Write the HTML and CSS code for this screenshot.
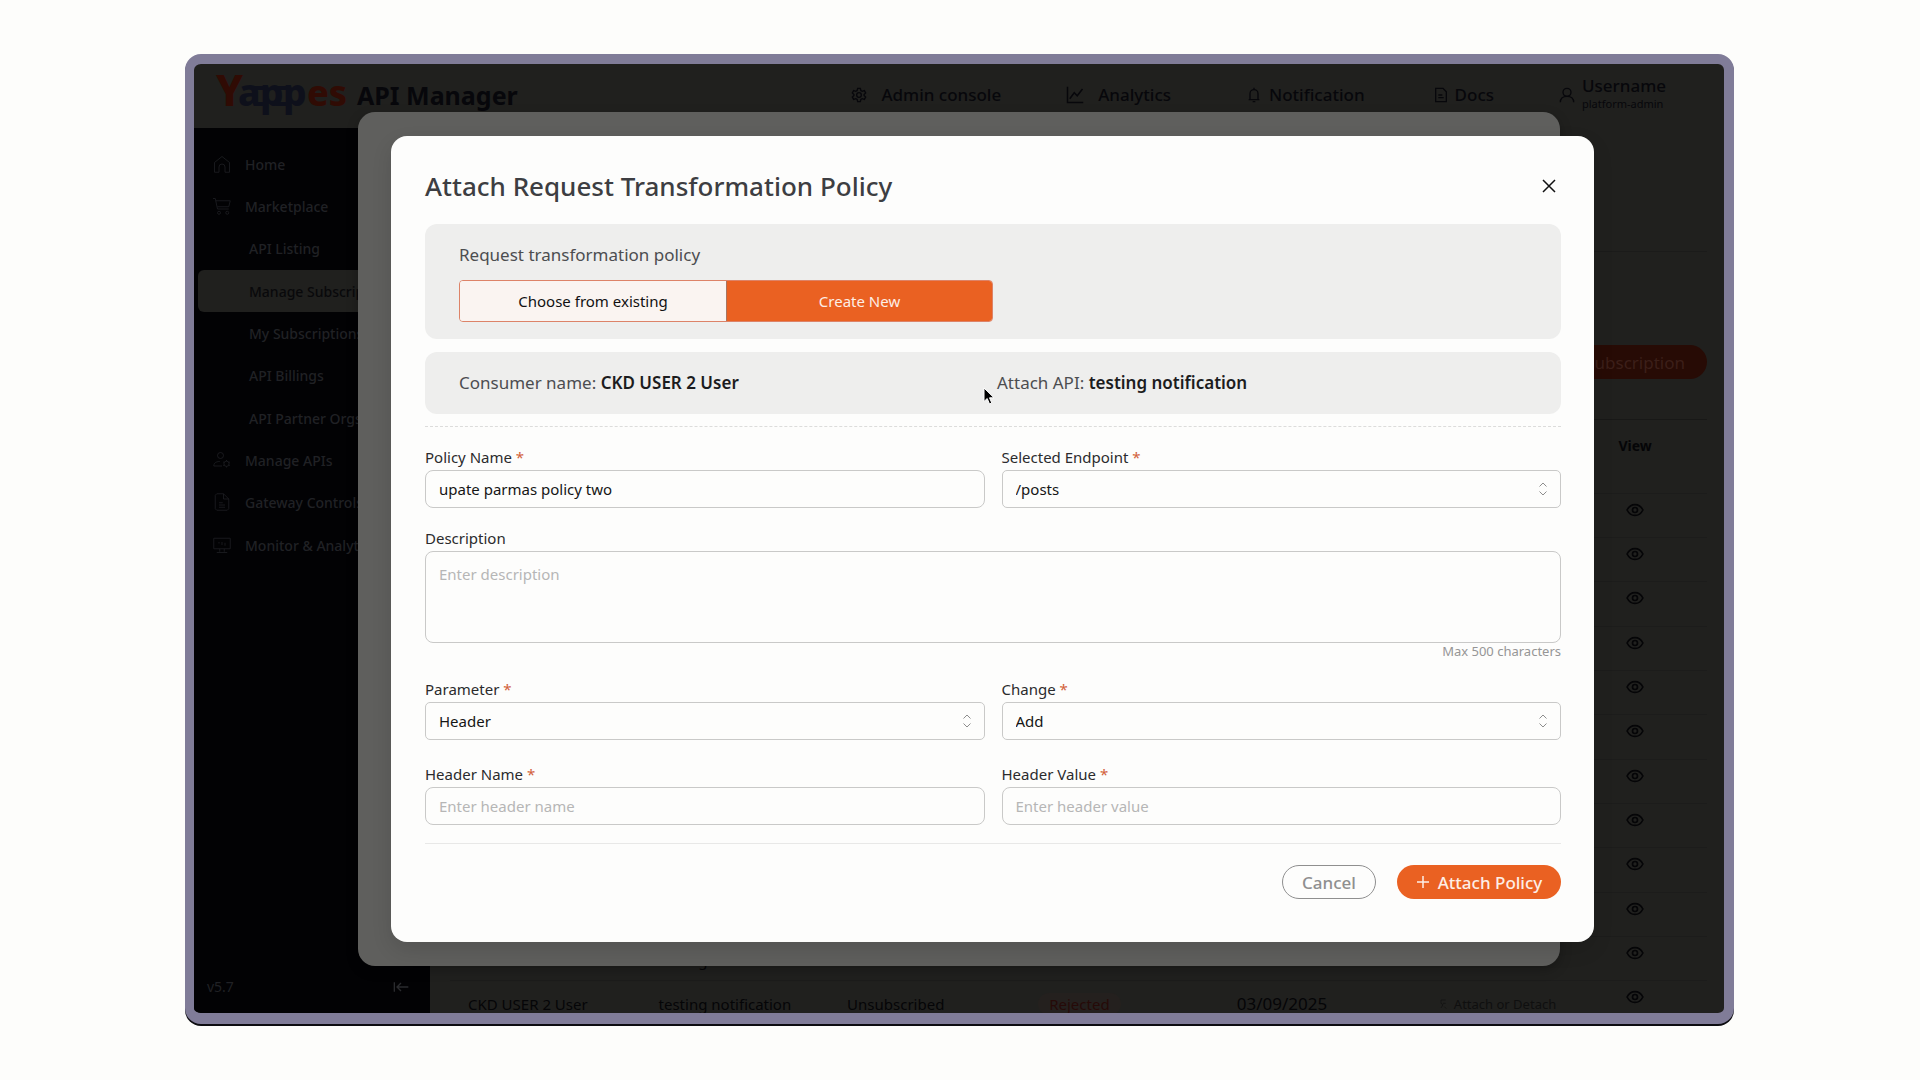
FILE: index.html
```html
<!DOCTYPE html>
<html lang="en">
<head>
<meta charset="utf-8">
<meta name="viewport" content="width=device-width, initial-scale=1">
<title>Yappes API Manager</title>
<link rel="stylesheet" href="styles.css">
</head>
<body>
<svg class="sprite" aria-hidden="true">
  <symbol id="eye" viewBox="0 0 24 24"><path d="M2.5 12C4.5 8 8 5.500 12 5.500s7.500 2.500 9.500 6.500c-2 4-5.500 6.500-9.500 6.500S4.500 16 2.500 12z"/><circle cx="12" cy="12" r="3"/></symbol>
  <symbol id="updown" viewBox="0 0 10 16"><path d="M1.500 5.500 5 2l3.500 3.500M1.500 10.500 5 14l3.500-3.500"/></symbol>
</svg>
<div class="window">
  <header class="topbar">
    <svg class="logo" viewBox="0 0 132 48" role="img" aria-label="Yappes">
      <text class="logo-y" x="0" y="35">Y</text>
      <text class="logo-app" x="22 44 67" y="35">app</text>
      <path class="logo-link" d="M36 17h14M58 17h14M38 33h10M60 33h12"/>
      <text class="logo-es" x="91" y="35">es</text>
    </svg>
    <h1 class="brand">API Manager</h1>
    <nav class="nav">
      <a class="nav-item nav-admin" href="#"><svg viewBox="0 0 24 24"><path d="M10 2h4l.8 3.200 2 1.200 3.200-1 2 3.500-2.400 2.300v1.600l2.400 2.300-2 3.500-3.200-1-2 1.200L14 22h-4l-.8-3.200-2-1.200-3.200 1-2-3.500 2.400-2.300v-1.600L2 8.900l2-3.500 3.200 1 2-1.200z"/><circle cx="12" cy="12" r="3.500"/></svg>Admin console</a>
      <a class="nav-item nav-analytics" href="#"><svg viewBox="0 0 24 24"><path d="M2 1v21h21M5 17l6-8 4 4 7-9"/></svg>Analytics</a>
      <a class="nav-item nav-notify" href="#"><svg viewBox="0 0 20 24"><path d="M2 19h16M4 19V10a6 6 0 0 1 12 0v9M10 4V1M8 22h4"/></svg>Notification</a>
      <a class="nav-item nav-docs" href="#"><svg viewBox="0 0 20 24"><path d="M2 2h11l5 5v15H2zM6 12h6M6 16h8"/></svg>Docs</a>
      <a class="user" href="#"><svg viewBox="0 0 24 24"><circle cx="12" cy="8" r="6"/><path d="M2 23c0-6 4-9 10-9s10 3 10 9"/></svg><span class="user-text"><span class="user-name">Username</span><span class="user-role">platform-admin</span></span></a>
    </nav>
  </header>
  <div class="body">
    <aside class="sidebar">
      <ul class="menu">
        <li><a href="#"><svg viewBox="0 0 24 24"><path d="M2 10 12 2l10 8v13h-6v-7a4 4 0 0 0-8 0v7H2z"/></svg>Home</a></li>
        <li><a href="#"><svg viewBox="0 0 24 24"><path d="M0 2h3l3 14h15M4 5h19l-2 8H6"/><circle cx="8" cy="21" r="2"/><circle cx="19" cy="21" r="2"/></svg>Marketplace</a></li>
        <li><a class="sub" href="#">API Listing</a></li>
        <li><a class="sub active" href="#">Manage Subscriptions</a></li>
        <li><a class="sub" href="#">My Subscriptions</a></li>
        <li><a class="sub" href="#">API Billings</a></li>
        <li><a class="sub" href="#">API Partner Orgs</a></li>
        <li><a href="#"><svg viewBox="0 0 24 24"><circle cx="10" cy="6" r="4"/><path d="M12 20H1c0-4 3-6 8-6"/><circle cx="18" cy="17" r="3.500"/><path d="M18 12v1.500M18 20.500V22M13.500 14.500l1.500 1M21 18.500l1.500 1M13.500 19.500l1.500-1M21 15.500l1.500-1"/></svg>Manage APIs</a></li>
        <li><a href="#"><svg viewBox="0 0 24 24"><path d="M5 1h9l7 7v13l-2 2H5l-2-2V3zM14 1v7h7M8 13h5M8 16h8M8 19h8"/></svg>Gateway Controls</a></li>
        <li><a href="#"><svg viewBox="0 0 24 24"><path d="M1 3h22v14H1zM9 17v4M15 17v4M5 22h14M8 8v2M12 8v4M16 9v4"/></svg>Monitor &amp; Analytics</a></li>
      </ul>
      <div class="sidebar-foot"><span>v5.7</span><button class="collapse" aria-label="Collapse menu"><svg viewBox="0 0 24 16"><path d="M2 1v14M23 8H6M12 2 6 8l6 6"/></svg></button></div>
    </aside>
    <main class="content">
      <div class="toolbar"><button class="add">Add Subscription</button></div>
      <table class="grid">
        <colgroup><col class="c-consumer"><col class="c-api"><col class="c-status"><col class="c-state"><col class="c-date"><col class="c-policy"><col class="c-view"></colgroup>
        <thead><tr><th colspan="6"></th><th class="view">View</th></tr></thead>
        <tbody>
          <tr><td colspan="6"></td><td class="view"><svg><use href="#eye"/></svg></td></tr>
          <tr><td colspan="6"></td><td class="view"><svg><use href="#eye"/></svg></td></tr>
          <tr><td colspan="6"></td><td class="view"><svg><use href="#eye"/></svg></td></tr>
          <tr><td colspan="6"></td><td class="view"><svg><use href="#eye"/></svg></td></tr>
          <tr><td colspan="6"></td><td class="view"><svg><use href="#eye"/></svg></td></tr>
          <tr><td colspan="6"></td><td class="view"><svg><use href="#eye"/></svg></td></tr>
          <tr><td colspan="6"></td><td class="view"><svg><use href="#eye"/></svg></td></tr>
          <tr><td colspan="6"></td><td class="view"><svg><use href="#eye"/></svg></td></tr>
          <tr><td colspan="6"></td><td class="view"><svg><use href="#eye"/></svg></td></tr>
          <tr><td colspan="6"></td><td class="view"><svg><use href="#eye"/></svg></td></tr>
          <tr><td></td><td>testing</td><td></td><td></td><td></td><td></td><td class="view"><svg><use href="#eye"/></svg></td></tr>
          <tr><td>CKD USER 2 User</td><td>testing notification</td><td>Unsubscribed</td><td><span class="badge">Rejected</span></td><td class="date">03/09/2025</td><td><span class="policy"><svg viewBox="0 0 14 18"><path d="M11 3H4v5l3 2-3 5M7 8h4M9 13l3 3"/></svg>Attach or Detach</span></td><td class="view"><svg><use href="#eye"/></svg></td></tr>
        </tbody>
      </table>
    </main>
  </div>

  <div class="dialog-back"></div>
  <section class="dialog" role="dialog" aria-labelledby="dialog-title">
    <div class="dialog-head">
      <h2 id="dialog-title">Attach Request Transformation Policy</h2>
      <button class="close" aria-label="Close"><svg viewBox="0 0 14 14"><path d="M1 1l12 12M13 1 1 13"/></svg></button>
    </div>
    <div class="panel mode">
      <p>Request transformation policy</p>
      <div class="segmented"><button class="segment">Choose from existing</button><button class="segment selected">Create New</button></div>
    </div>
    <div class="panel facts">
      <p>Consumer name: <strong>CKD USER 2 User</strong></p>
      <p>Attach API: <strong>testing notification</strong></p>
    </div>
    <form class="form">
      <div class="pair">
        <div class="field"><label for="policy-name">Policy Name <span class="req">*</span></label><input id="policy-name" type="text" value="upate parmas policy two"></div>
        <div class="field"><label for="endpoint">Selected Endpoint <span class="req">*</span></label><div class="select"><select id="endpoint"><option>/posts</option></select><svg><use href="#updown"/></svg></div></div>
      </div>
      <div class="field"><label for="description">Description</label><textarea id="description" placeholder="Enter description"></textarea><span class="hint">Max 500 characters</span></div>
      <div class="pair">
        <div class="field"><label for="parameter">Parameter <span class="req">*</span></label><div class="select"><select id="parameter"><option>Header</option></select><svg><use href="#updown"/></svg></div></div>
        <div class="field"><label for="change">Change <span class="req">*</span></label><div class="select"><select id="change"><option>Add</option></select><svg><use href="#updown"/></svg></div></div>
      </div>
      <div class="pair last">
        <div class="field"><label for="header-name">Header Name <span class="req">*</span></label><input id="header-name" type="text" placeholder="Enter header name"></div>
        <div class="field"><label for="header-value">Header Value <span class="req">*</span></label><input id="header-value" type="text" placeholder="Enter header value"></div>
      </div>
      <div class="actions">
        <button type="button" class="cancel">Cancel</button>
        <button type="button" class="submit"><svg viewBox="0 0 14 14"><path d="M7 1v12M1 7h12"/></svg>Attach Policy</button>
      </div>
    </form>
    <svg class="pointer" viewBox="0 0 12 19" aria-hidden="true"><path d="M1 1v13.500l3.200-3 2.300 5.500 2.300-1-2.300-5.200H11z"/></svg>
  </section>
</div>
</body>
</html>
```
FILE: styles.css
```css
* { box-sizing: border-box; }
body {
  margin: 0;
  min-height: 100vh;
  padding: 54px 186px 56px 185px;
  display: flex;
  background: #fdfdfb;
  font-family: "Noto Sans", "Open Sans", sans-serif;
  font-size: 15px;
  color: #111;
}
button, input, select, textarea { font: inherit; color: inherit; margin: 0; }
button { padding: 0; border: 0; background: none; }
a { color: inherit; text-decoration: none; }
svg { fill: none; stroke: currentColor; flex: none; display: block; }
h1, h2, p, ul { margin: 0; padding: 0; list-style: none; font-weight: 500; }
.sprite { position: absolute; width: 0; height: 0; }

.window {
  position: relative;
  flex: 1;
  min-width: 0;
  height: calc(100vh - 110px);
  display: flex;
  flex-direction: column;
  overflow: hidden;
  border: 10px solid #807c98;
  border-left-width: 9px;
  border-bottom-width: 11px;
  border-radius: 16px;
  box-shadow: 0 2px 0 #0c0c10;
  background: #20201e;
}

/* Top bar */
.topbar { flex: none; height: 64px; display: flex; align-items: center; padding: 0 47px 2px 22px; color: #07070b; }
.logo { width: 132px; height: 48px; overflow: visible; font-weight: 800; }
.logo text { stroke: none; }
.logo-y { font-size: 42px; fill: #300b04; }
.logo-app { font-size: 37px; fill: #0e101b; }
.logo-es { font-size: 36px; fill: #300b04; }
.logo-link { stroke: #0e101b; stroke-width: 4; }
.brand { margin-left: 9px; font-size: 25px; font-weight: 700; line-height: 34px; }
.nav { margin-left: auto; display: flex; align-items: center; height: 60px; font-size: 17px; font-weight: 500; line-height: 24px; }
.nav-item { display: flex; align-items: center; }
.nav svg { stroke-width: 2; width: 16px; height: 16px; }
.nav-admin { gap: 14px; margin-right: 65px; }
.nav-analytics { gap: 14px; margin-right: 75px; }
.nav .nav-analytics svg { width: 18px; height: 18px; }
.nav-notify { gap: 7px; margin-right: 68px; }
.nav-docs { gap: 6px; margin-right: 65px; }
.user { display: flex; align-items: center; gap: 7px; width: 118px; }
.user-text { display: flex; flex-direction: column; margin-top: -4px; }
.user-name { line-height: 22px; }
.user-role { font-size: 11px; font-weight: 400; line-height: 14px; }

/* Sidebar */
.body { flex: 1; min-height: 0; display: flex; }
.sidebar { flex: none; width: 236px; padding: 15px 0 11px; display: flex; flex-direction: column; justify-content: space-between; background: #020204; color: #202125; font-size: 14px; }
.menu a { display: flex; align-items: center; gap: 14px; height: 42px; padding-left: 19px; white-space: nowrap; }
.menu li:nth-child(3n) { padding-bottom: 1px; }
.menu svg { width: 18px; height: 18px; stroke-width: 1; }
.menu .sub { margin-left: 4px; padding-left: 51px; }
.menu .active { background: #20201e; color: #09090b; border-radius: 6px 0 0 6px; }
.sidebar-foot { display: flex; align-items: center; justify-content: space-between; padding: 0 21px 0 13px; line-height: 30px; }
.collapse svg { width: 16px; height: 12px; stroke-width: 2; }
.collapse { color: #2a2b2e; }

/* Subscription list */
.content { flex: 1; min-width: 0; padding: 0 17px 0 20px; color: #050507; }
.toolbar { display: flex; justify-content: flex-end; align-items: flex-end; height: 251px; background: linear-gradient(#1b1b1a, #1b1b1a) 0 123px / 100% 1px no-repeat; }
.add { width: 180px; height: 34px; border-radius: 17px; background: #270b05; color: #3c1f19; font-size: 17px; white-space: nowrap; }
.grid { width: 100%; margin-top: 40px; border-collapse: collapse; table-layout: fixed; border-top: 1px solid #181817; }
.c-consumer { width: 15%; }
.c-api { width: 15%; }
.c-status { width: 16%; }
.c-state { width: 15%; }
.c-date { width: 16%; }
.c-policy { width: 13%; }
.c-view { width: 10%; }
.grid th { height: 74px; padding: 16px 0 0; vertical-align: top; font-size: 14px; font-weight: 700; line-height: 20px; }
.grid td { height: 44px; padding: 2px 0 0 20px; text-align: left; border-top: 1px solid #1c1c1b; line-height: 20px; white-space: nowrap; }
.grid td:first-child { padding-left: 18px; }
.grid tr:nth-child(3n) td { height: 45px; }
.grid .view { padding-left: 0; padding-right: 18px; text-align: center; }
.grid td.view { padding-top: 6px; vertical-align: top; }
.view svg { width: 20px; height: 20px; margin: 0 auto; stroke-width: 2; }
.badge { display: inline-block; margin-left: -10px; padding: 0 11px; border-radius: 11px; line-height: 22px; background: #24201e; color: #260a08; }
.grid .date { font-size: 17px; }
.policy { display: flex; align-items: center; gap: 6px; font-size: 13px; color: #0f0f0f; }
.policy svg { width: 10px; height: 12px; }

/* Dialogs lie over the page, one on top of the other */
.dialog-back { position: absolute; top: 48px; right: 164px; bottom: 47px; left: 164px; border-radius: 17px; background: #5f5f5d; box-shadow: 0 4px 12px rgba(0, 0, 0, .25); }
.dialog { position: absolute; top: 72px; right: 130px; left: 197px; padding: 33px 33px 43px 34px; border-radius: 16px; background: #fdfdfc; box-shadow: 0 8px 20px rgba(0, 0, 0, .12); }
.dialog-head { display: flex; align-items: center; justify-content: space-between; margin-bottom: 21px; padding-right: 5px; }
.dialog-head h2 { font-size: 26px; line-height: 34px; color: #3d3e42; }
.close svg { width: 14px; height: 14px; stroke-width: 1.500; }
.panel { margin-bottom: 13px; border-radius: 12px; background: #eeeeed; font-size: 17px; line-height: 24px; color: #4c4d50; }
.panel p { font-weight: 400; }
.mode { padding: 19px 34px 17px; }
.segmented { display: grid; grid-template-columns: 1fr 1fr; width: 50%; min-width: 534px; height: 42px; margin-top: 13px; border: 1px solid #dd8368; border-radius: 4px; overflow: hidden; }
.segment { background: #faf4f1; color: #111; font-size: 15px; }
.selected { background: #ea6122; color: #fdeee6; border-left: 1px solid #a77560; }
.facts { display: grid; grid-template-columns: 1fr 1fr; column-gap: 8px; padding: 19px 34px; margin-bottom: 12px; }
.facts strong { font-weight: 600; color: #1c1c1e; }

.form { display: flex; flex-direction: column; gap: 20px; padding-top: 20px; border-top: 1px dashed #dcdcdb; }
.pair { display: grid; grid-template-columns: 1fr 1fr; column-gap: 17px; }
.field { display: flex; flex-direction: column; }
.field label { margin-bottom: 3px; line-height: 20px; color: #2b2b2d; }
.req { color: #d2613a; }
.field input, .field select, .field textarea { display: block; width: 100%; height: 38px; padding: 0 13px; border: 1px solid #c9c9c8; border-radius: 8px; outline: 0; background: #fdfdfc; color: #151515; }
.field select { appearance: none; border-radius: 5px; }
.field textarea { height: 92px; padding: 12px 13px; line-height: 20px; resize: none; }
.field ::placeholder { color: #b6b6b6; opacity: 1; }
.select { position: relative; }
.select svg { position: absolute; top: 11px; right: 13px; width: 10px; height: 16px; color: #8d8d8d; pointer-events: none; }
.hint { align-self: flex-end; font-size: 13px; line-height: 16px; color: #969696; }
.last { margin-top: 4px; }
.actions { display: flex; justify-content: flex-end; gap: 21px; margin-top: -2px; padding-top: 21px; border-top: 1px solid #e8e8e7; font-size: 17px; font-weight: 500; }
.cancel, .submit { height: 34px; border-radius: 17px; }
.cancel { width: 94px; border: 1px solid #8f8f8f; color: #8f8f8f; }
.submit { width: 164px; display: flex; align-items: center; justify-content: center; gap: 8px; background: #ea6122; color: #fdeee6; }
.submit svg { width: 14px; height: 14px; stroke-width: 1.500; }
.pointer { position: absolute; top: 251px; left: 592px; width: 12px; height: 19px; fill: #000; stroke: #fff; stroke-width: 1; }
```
